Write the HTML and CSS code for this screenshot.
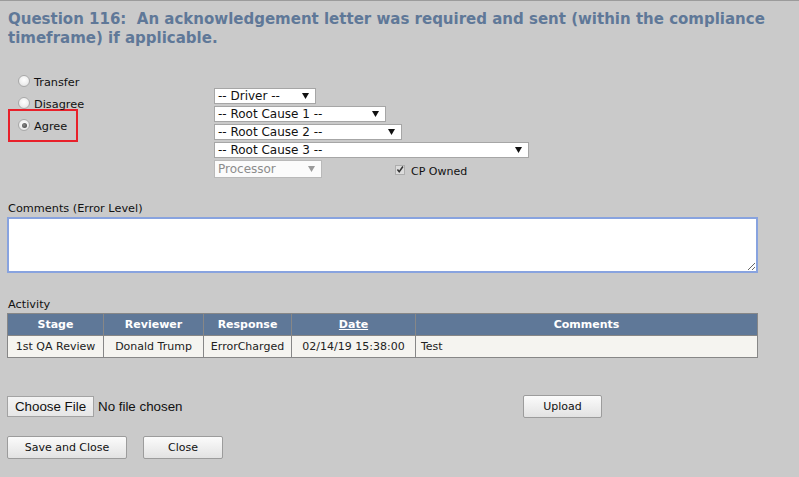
FILE: index.html
```html
<!DOCTYPE html>
<html>
<head>
<meta charset="utf-8">
<link rel="stylesheet" href="styles.css">
</head>
<body>
<h1 class="title">Question 116:&nbsp; An acknowledgement letter was required and sent (within the compliance timeframe) if applicable.</h1>

<div class="decision">
  <div class="radios">
    <div class="radio-row"><span class="radio"></span><span>Transfer</span></div>
    <div class="radio-row"><span class="radio"></span><span>Disagree</span></div>
    <div class="radio-row agree"><span class="radio checked"></span><span>Agree</span></div>
  </div>
  <div class="selects">
    <div class="sel w-driver"><span>-- Driver --</span><svg class="arrow" width="7" height="6" viewBox="0 0 7 6"><path d="M0 0H7L3.5 6Z"/></svg></div>
    <div class="sel w-rc1"><span>-- Root Cause 1 --</span><svg class="arrow" width="7" height="6" viewBox="0 0 7 6"><path d="M0 0H7L3.5 6Z"/></svg></div>
    <div class="sel w-rc2"><span>-- Root Cause 2 --</span><svg class="arrow" width="7" height="6" viewBox="0 0 7 6"><path d="M0 0H7L3.5 6Z"/></svg></div>
    <div class="sel w-rc3"><span>-- Root Cause 3 --</span><svg class="arrow" width="7" height="6" viewBox="0 0 7 6"><path d="M0 0H7L3.5 6Z"/></svg></div>
    <div class="proc-row">
      <div class="sel disabled w-proc"><span>Processor</span><svg class="arrow" width="7" height="6" viewBox="0 0 7 6"><path d="M0 0H7L3.5 6Z"/></svg></div>
      <div class="cp"><span class="check"><svg width="9" height="9" viewBox="0 0 9 9"><path d="M1.6 4.6L3.6 7L7.8 1.2" fill="none" stroke="#333" stroke-width="1.7"/></svg></span><span>CP Owned</span></div>
    </div>
  </div>
</div>

<div class="label comments-label">Comments (Error Level)</div>
<textarea class="comments"></textarea>

<div class="label activity-label">Activity</div>
<table class="activity">
  <colgroup>
    <col class="c-stage"><col class="c-rev"><col class="c-resp"><col class="c-date"><col class="c-com">
  </colgroup>
  <thead>
    <tr><th>Stage</th><th>Reviewer</th><th>Response</th><th><u>Date</u></th><th>Comments</th></tr>
  </thead>
  <tbody>
    <tr><td>1st QA Review</td><td>Donald Trump</td><td>ErrorCharged</td><td>02/14/19 15:38:00</td><td class="left">Test</td></tr>
  </tbody>
</table>

<div class="file-row">
  <div class="file-part">
    <span class="choose">Choose File</span><span class="nofile">No file chosen</span>
  </div>
  <button class="btn upload">Upload</button>
</div>

<div class="actions">
  <button class="btn save">Save and Close</button>
  <button class="btn close">Close</button>
</div>
</body>
</html>
```

FILE: styles.css
```css
html { background: #cacaca; }
body {
  margin: 0;
  border-top: 1px solid #9b9b9b;
  padding: 8px 7px 0 7px;
  background: #cacaca;
  font-family: "DejaVu Sans", Verdana, sans-serif;
  font-size: 11px;
  color: #111;
}
.title {
  margin: 0;
  padding: 1px 0 0 1px;
  font-size: 15px;
  line-height: 19px;
  font-weight: bold;
  color: #5f7898;
}
.decision {
  display: flex;
  margin-top: 24px;
}
.radios {
  width: 207px;
  flex: none;
  font-size: 11.3px;
}
.radio-row {
  display: flex;
  height: 22px;
  line-height: 22px;
  padding-left: 11px;
}
.radio-row.agree {
  width: 50px;
  margin-top: -7px;
  margin-left: 1px;
  padding: 5px 8px 2px 8px;
  border: 2px solid #e8202a;
}
.radio {
  width: 12px;
  height: 12px;
  box-sizing: border-box;
  margin-top: 3px;
  margin-right: 4px;
  border: 1px solid #a9a9a9;
  border-radius: 50%;
  background: radial-gradient(circle at 50% 40%, #ffffff 0%, #f1f1f1 50%, #d9d9d9 100%);
  position: relative;
}
.radio.checked::after {
  content: "";
  position: absolute;
  left: 2.5px;
  top: 2.5px;
  width: 5px;
  height: 5px;
  border-radius: 50%;
  background: radial-gradient(circle at 40% 40%, #8a8a8a, #3c3c3c);
}
.selects {
  margin-top: 16px;
  display: flex;
  flex-direction: column;
  gap: 2px;
  font-size: 12px;
}
.sel {
  height: 16px;
  box-sizing: border-box;
  border: 1px solid #a6a6a6;
  background: #fff;
  display: flex;
  align-items: center;
  justify-content: space-between;
  padding: 0 6px 0 3px;
  line-height: 14px;
  color: #111;
}
.arrow { fill: #111; flex: none; }
.w-driver { width: 102px; }
.w-rc1 { width: 172px; }
.w-rc2 { width: 188px; }
.w-rc3 { width: 315px; }
.proc-row {
  display: flex;
  align-items: center;
}
.w-proc { width: 108px; height: 18px; }
.sel.disabled {
  color: #8c8c8c;
  border-color: #b9b9b9;
  background: #fbfbfb;
}
.sel.disabled .arrow { fill: #9a9a9a; }
.cp {
  display: flex;
  align-items: center;
  margin-left: 73px;
  margin-top: 4px;
  font-size: 11px;
}
.check {
  width: 10px;
  height: 10px;
  box-sizing: border-box;
  border: 1px solid #adadad;
  background: #dcdcdc;
  margin-right: 6px;
  margin-top: -3px;
  display: flex;
}
.check svg { margin: -1px 0 0 0; }
.label {
  line-height: 14px;
  padding-left: 1px;
  font-size: 11.3px;
}
.comments-label { margin-top: 24px; }
.comments {
  display: block;
  margin: 1px 0 0 0;
  width: 751px;
  height: 56px;
  box-sizing: border-box;
  border: 2px solid #88a3df;
  background: #fff;
  resize: both;
  font-family: "DejaVu Sans", sans-serif;
  font-size: 12px;
  outline: none;
}
.activity-label { margin-top: 25px; }
.activity {
  margin-top: 1px;
  width: 750px;
  border-collapse: collapse;
  table-layout: fixed;
  font-size: 11px;
}
.c-stage { width: 96px; }
.c-rev { width: 100px; }
.c-resp { width: 88px; }
.c-date { width: 124px; }
.c-com { width: 342px; }
.activity th, .activity td {
  border: 1px solid #878787;
  padding: 0;
  text-align: center;
  white-space: nowrap;
}
.activity th {
  background: #5f7898;
  color: #fff;
  font-weight: bold;
  height: 21px;
}
.activity td {
  background: #f5f4f0;
  color: #222;
  height: 21px;
}
.activity td.left {
  text-align: left;
  padding-left: 5px;
}
.file-row {
  margin-top: 37px;
  display: flex;
  align-items: center;
  height: 23px;
}
.file-part {
  width: 516px;
  display: flex;
  align-items: center;
  font-family: "Liberation Sans", Arial, sans-serif;
  font-size: 13.333px;
}
.choose {
  box-sizing: border-box;
  width: 87px;
  height: 21px;
  line-height: 19px;
  text-align: center;
  border: 1px solid #a3a3a3;
  background: linear-gradient(#f4f4f4, #e6e6e6);
  color: #111;
  margin-right: 4px;
}
.nofile { color: #111; }
.btn {
  box-sizing: border-box;
  height: 23px;
  border: 1px solid #9c9c9c;
  border-radius: 2px;
  background: linear-gradient(#fbfbfb, #e2e2e2);
  font-family: "DejaVu Sans", Verdana, sans-serif;
  font-size: 11px;
  color: #111;
  padding: 0;
  margin: 0;
}
.upload { width: 79px; }
.actions {
  margin-top: 18px;
  display: flex;
  gap: 16px;
}
.save { width: 120px; }
.close { width: 80px; }
```
